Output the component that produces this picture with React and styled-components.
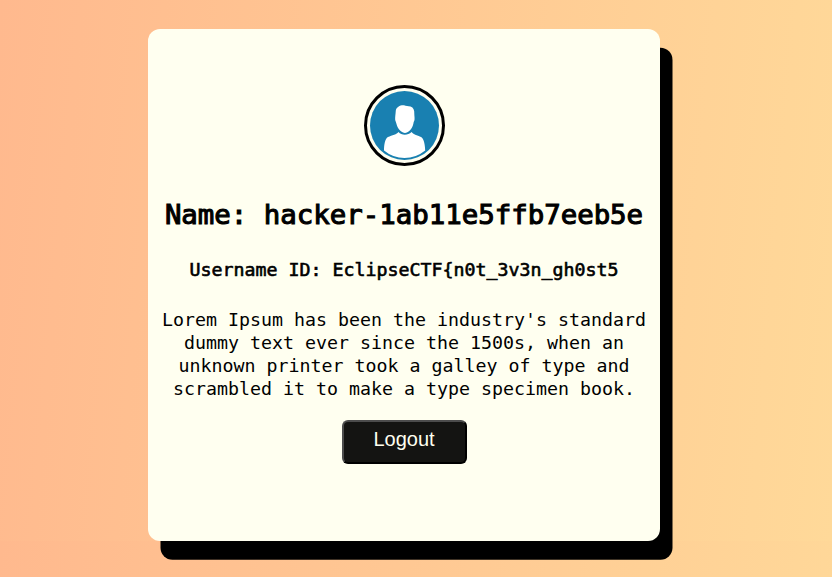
import React from "react";
import styled, { createGlobalStyle } from "styled-components";

const GlobalStyle = createGlobalStyle`
  * { box-sizing: border-box; }
  body { margin: 0; }
`;

const Page = styled.main`
  height: 577px;
  padding: 29px 0 0 148px;
  overflow: hidden;
  background: linear-gradient(95.2deg, #ffb98e, #ffd999) 0 0 / 100% 541px repeat-y;
`;

const Card = styled.section`
  display: flex;
  flex-direction: column;
  align-items: center;
  width: 512px;
  height: 512px;
  padding-top: 56px;
  border-radius: 12px;
  background: #fffff0;
  box-shadow: 12.5px 18.8px 0 #000;
  color: #000;
  font-family: "DejaVu Sans Mono", monospace;
  text-align: center;
  white-space: nowrap;
`;

const Avatar = styled.svg`
  display: block;
  width: 81px;
  height: 81px;
`;

const Name = styled.h1`
  margin: 31px 0 0;
  font-size: 27.4px;
  font-weight: 400;
  line-height: 35px;
  -webkit-text-stroke: 1.1px #000;
`;

const UserId = styled.h2`
  margin: 26px 0 0;
  font-size: 18.27px;
  font-weight: 400;
  line-height: 23px;
  -webkit-text-stroke: 0.6px #000;
`;

const Bio = styled.p`
  margin: 27px 0 0;
  font-size: 18.27px;
  line-height: 23px;
`;

const LogoutButton = styled.button`
  width: 125px;
  height: 44px;
  margin-top: 20px;
  padding: 0 0 5px;
  border: 2px solid;
  border-color: #4c4c4c #000 #000 #4c4c4c;
  border-radius: 6px;
  background: #141412;
  color: #fffff0;
  font: 20px "Liberation Sans", sans-serif;
`;

export default function App() {
  return (
    <Page>
      <GlobalStyle />
      <Card>
        <Avatar viewBox="0 0 81 81" aria-label="Profile">
          <circle cx="40.5" cy="40.5" r="39" fill="#fffff0" stroke="#000" strokeWidth="3" />
          <circle cx="40.5" cy="40.5" r="34.5" fill="#1980b1" />
          <path
            d="M31.8 25.5C32.5 22 36 20 40 20.3C42 21 44 21 46.5 21.5C49.5 22.5 50.5 25 50.3 29C50.3 31 50.8 32 50.5 35C50 36.5 49.6 37 49.3 39C48 44.5 44 48 41 48C38 48 33.8 44.5 32.5 39C32 37 31.6 36.5 31.2 35C31 32 31.5 30 31.8 25.5Z"
            fill="#fff"
          />
          <path
            d="M34.5 47C37.5 50.5 44 50.5 47.5 47C49 49.3 53 50.3 57 52C60 53.5 61 60 61.2 65.5Q52 73 40.5 73Q29 73 20 65.5C20 60 21 53.5 24 52C28 50.3 33 49.3 34.5 47Z"
            fill="#fff"
          />
        </Avatar>
        <Name>Name: hacker-1ab11e5ffb7eeb5e</Name>
        <UserId>Username ID: EclipseCTF&#123;n0t_3v3n_gh0st5</UserId>
        <Bio>
          Lorem Ipsum has been the industry's standard
          <br />
          dummy text ever since the 1500s, when an
          <br />
          unknown printer took a galley of type and
          <br />
          scrambled it to make a type specimen book.
        </Bio>
        <LogoutButton type="button">Logout</LogoutButton>
      </Card>
    </Page>
  );
}
